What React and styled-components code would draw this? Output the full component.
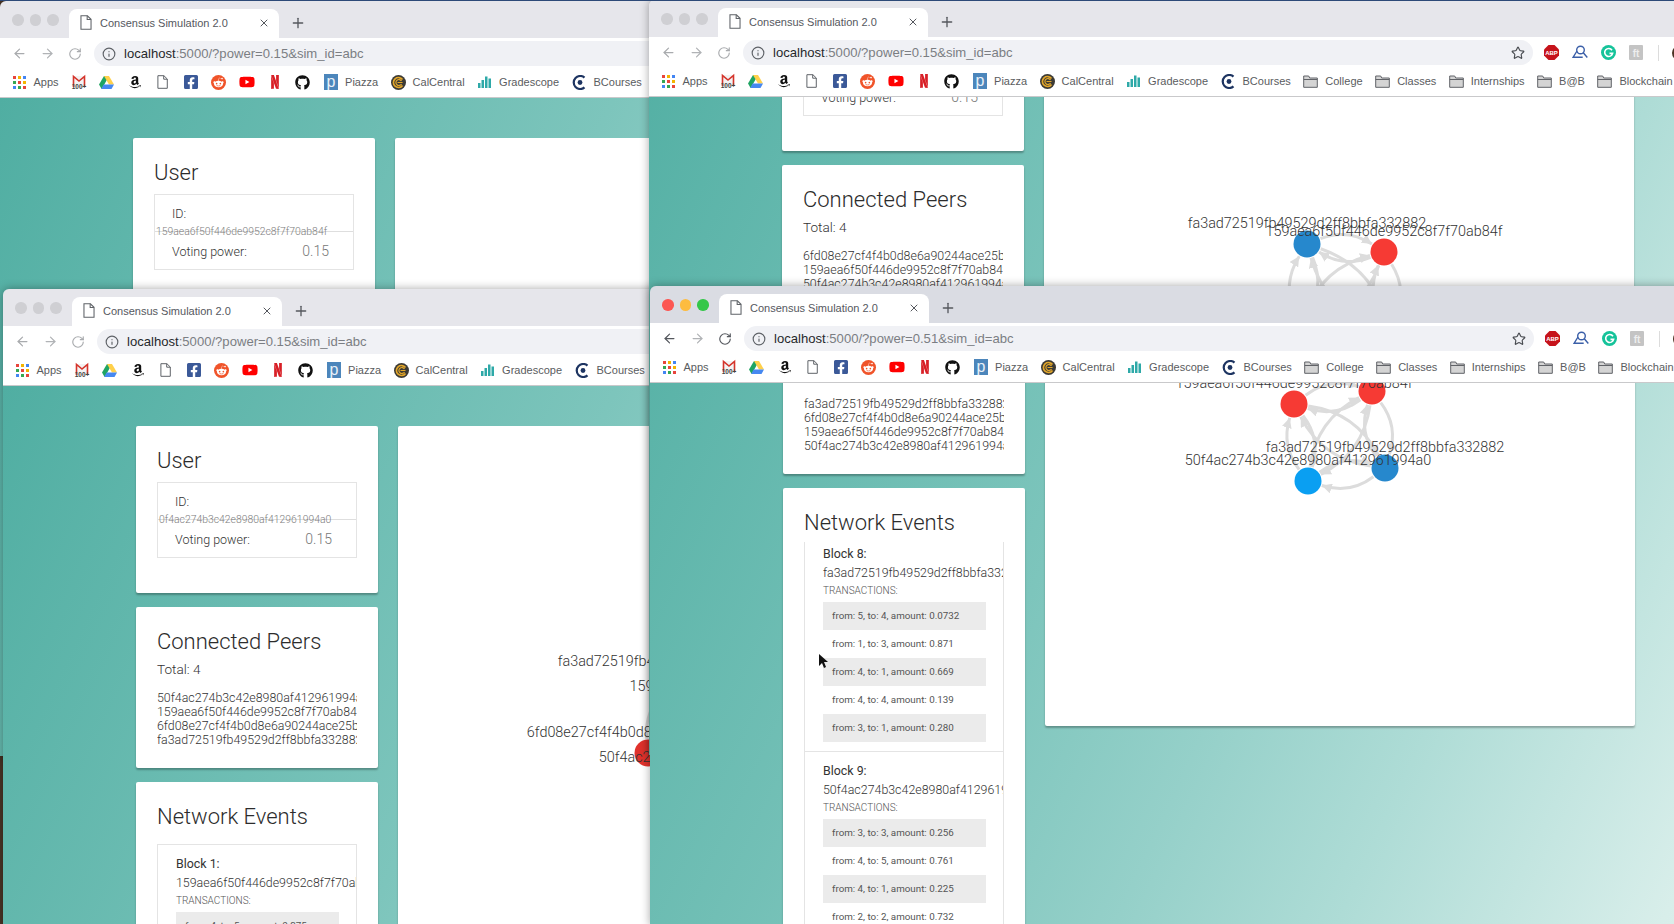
import React from 'react'
import styled, { createGlobalStyle } from 'styled-components'
import { ArrowLeft, ArrowRight, RotateCw, Info, Star, Plus, X } from 'lucide-react'
import { FaAmazon, FaFacebookSquare, FaRedditAlien, FaYoutube, FaGithub } from 'react-icons/fa'
import { SiNetflix } from 'react-icons/si'

const HASH = {
  fa3: 'fa3ad72519fb49529d2ff8bbfa332882',
  c15: '159aea6f50f446de9952c8f7f70ab84f',
  c6f: '6fd08e27cf4f4b0d8e6a90244ace25b3',
  c50: '50f4ac274b3c42e8980af412961994a0',
}

const RED = '#f63a34'
const BLUE = '#2688cd'
const SKY = '#0a9ff2'

const GRAPHS = {
  behind: [
    { x: 279, y: 256, color: BLUE, label: HASH.fa3 },
    { x: 350, y: 281, color: RED, label: HASH.c15 },
    { x: 250, y: 327, color: '#e0322c', label: HASH.c6f },
    { x: 324, y: 352, color: SKY, label: HASH.c50 },
  ],
  top: [
    { x: 263, y: 260, color: BLUE, label: HASH.fa3 },
    { x: 340, y: 268, color: RED, label: HASH.c15 },
    { x: 256, y: 343, color: SKY, label: HASH.c50 },
    { x: 346, y: 348, color: RED, label: HASH.c6f },
  ],
  front: [
    { x: 249, y: 272, color: RED, label: HASH.c15 },
    { x: 327, y: 259, color: RED, label: HASH.c6f },
    { x: 340, y: 336, color: BLUE, label: HASH.fa3 },
    { x: 263, y: 349, color: SKY, label: HASH.c50 },
  ],
}

const BLOCKS = {
  first: [
    { n: 1, hash: HASH.c15, txs: ['from: 4, to: 5, amount: 0.275'] },
  ],
  later: [
    {
      n: 8,
      hash: HASH.fa3,
      txs: [
        'from: 5, to: 4, amount: 0.0732',
        'from: 1, to: 3, amount: 0.871',
        'from: 4, to: 1, amount: 0.669',
        'from: 4, to: 4, amount: 0.139',
        'from: 3, to: 1, amount: 0.280',
      ],
    },
    {
      n: 9,
      hash: HASH.c50,
      txs: [
        'from: 3, to: 3, amount: 0.256',
        'from: 4, to: 5, amount: 0.761',
        'from: 4, to: 1, amount: 0.225',
        'from: 2, to: 2, amount: 0.732',
        'from: 1, to: 2, amount: 0.418',
      ],
    },
  ],
}

const GlobalStyle = createGlobalStyle`
  html, body {
    margin: 0;
    height: 100%;
    overflow: hidden;
    background: #4a3526;
  }
  * { box-sizing: border-box; }
`

const Desktop = styled.div`
  position: relative;
  width: 1674px;
  height: 924px;
  overflow: hidden;
  background: #4a3526;
  border-top: 1px solid #2d4a78;
`

const Window = styled.div`
  position: absolute;
  left: ${p => p.$left}px;
  top: ${p => p.$top}px;
  width: 1100px;
  height: ${p => p.$height}px;
  display: flex;
  flex-direction: column;
  overflow: hidden;
  border-radius: 6px 6px 0 0;
  box-shadow: 0 0 10px rgba(0, 0, 0, 0.35);
`

const TabStrip = styled.div`
  height: 37px;
  flex: none;
  display: flex;
  align-items: flex-end;
  padding-left: 12px;
  background: ${p => (p.$active ? '#dadce3' : '#e6e6eb')};
`

const Lights = styled.div`
  display: flex;
  gap: 6px;
  align-self: flex-start;
  margin-top: 13px;
  width: 57px;
`

const Light = styled.span`
  width: 11.5px;
  height: 11.5px;
  flex: none;
  border-radius: 50%;
  background: ${p => p.$color};
`

const Tab = styled.div`
  width: 210px;
  height: 29px;
  display: flex;
  align-items: center;
  padding: 0 9px 2px 11px;
  background: #fff;
  border-radius: 8px 8px 0 0;
  font: 11px 'Liberation Sans', sans-serif;
  color: #55585e;
`

const TabTitle = styled.span`
  flex: 1;
  margin-left: 8px;
  white-space: nowrap;
`

const NewTab = styled.span`
  display: flex;
  align-self: center;
  margin: 0 0 0 11px;
  padding-top: 7px;
  color: #55585e;
`

const Toolbar = styled.div`
  height: 29px;
  flex: none;
  display: flex;
  align-items: center;
  padding: 2px 0 0 12px;
  background: #fff;
  color: ${p => (p.$active ? '#55585e' : '#a9abae')};
`

const NavButton = styled.span`
  width: 28px;
  display: flex;
  color: ${p => (p.$dim ? '#b1b3b6' : 'inherit')};
`

const Omnibox = styled.div`
  width: 790px;
  height: 25px;
  margin-left: -2px;
  display: flex;
  align-items: center;
  padding: 0 8px 0 8px;
  border-radius: 13px;
  background: #f0f1f5;
  color: #5f6368;
`

const Url = styled.div`
  flex: 1;
  margin-left: 8px;
  font: 13.1px 'Liberation Sans', sans-serif;
  color: #7b7e83;
  white-space: nowrap;
  b {
    font-weight: 400;
    color: #26282b;
  }
`

const Extensions = styled.div`
  display: flex;
  align-items: center;
  gap: 13px;
  margin-left: 11px;
`

const Avatar = styled.span`
  width: 16px;
  height: 16px;
  border-radius: 50%;
  background: #4b3324;
`

const ExtDivider = styled.span`
  width: 1px;
  height: 16px;
  margin-left: 2px;
  background: #dcdcdc;
`

const BookmarkBar = styled.div`
  height: 31px;
  flex: none;
  display: flex;
  align-items: center;
  gap: 12px;
  padding-left: 11px;
  background: #fff;
  border-bottom: 1px solid #c9c9cb;
  font: 11px 'Liberation Sans', sans-serif;
  color: #5a5c60;
`

const Mark = styled.span`
  display: flex;
  align-items: center;
  gap: 6.5px;
  white-space: nowrap;
`

const IconBox = styled.span`
  width: 16px;
  height: 16px;
  flex: none;
  display: flex;
  align-items: center;
  justify-content: center;
  color: ${p => p.$color || 'inherit'};
`

const RedditDot = styled.span`
  width: 15px;
  height: 15px;
  display: flex;
  align-items: center;
  justify-content: center;
  border-radius: 50%;
  background: #f0542a;
  color: #fff;
`

const Page = styled.div`
  flex: 1;
  min-height: 0;
  overflow: hidden;
`

// the gradient belongs to the document, so it moves with the scroll
const Sheet = styled.div`
  display: flex;
  align-items: flex-start;
  gap: 20px;
  height: 1300px;
  margin-top: ${p => -p.$scroll}px;
  padding: 40px 0 0 133px;
  background: linear-gradient(115deg, #50aea2 0%, #7dc5bc 36%, #95d0c9 50%, #aedcd6 63%, #d8eeea 82%, #eef8f6 100%);
`

const Column = styled.div`
  width: 242px;
  flex: none;
  display: flex;
  flex-direction: column;
  gap: 14px;
`

const Card = styled.section`
  padding: 20px 21px ${p => p.$bottom}px;
  background: #fff;
  border-radius: 2px;
  box-shadow: 0 2px 2px rgba(0, 0, 0, 0.28);
  font-family: Roboto, 'Liberation Sans', sans-serif;
  font-weight: 300;
  color: #333;
  overflow: hidden;
`

const GraphCard = styled.section`
  width: 590px;
  height: 594px;
  flex: none;
  background: #fff;
  border-radius: 2px;
  box-shadow: 0 2px 2px rgba(0, 0, 0, 0.28);
  overflow: hidden;
`

const Title = styled.h2`
  margin: 0 0 4px;
  font-size: 22px;
  line-height: 30px;
  font-weight: 300;
  color: #2c2c2c;
`

const UserBox = styled.div`
  width: 200px;
  height: 76px;
  margin-top: 6px;
  border: 1px solid #e4e4e4;
  font-size: 12.5px;
  overflow: hidden;
`

const IdRow = styled.div`
  position: relative;
  height: 37px;
  padding: 11px 0 0 17px;
  line-height: 15px;
  border-bottom: 1px solid #dedede;
`

const IdHash = styled.span`
  position: absolute;
  left: 1px;
  bottom: -7px;
  font-size: 10.4px;
  line-height: 13px;
  color: #7d7d7d;
  white-space: nowrap;
`

const PowerRow = styled.div`
  display: flex;
  justify-content: space-between;
  padding: 12px 24px 0 17px;
  line-height: 15px;
`

const PowerValue = styled.span`
  font-size: 14px;
  color: #777;
`

const TotalLine = styled.div`
  font-size: 13.6px;
  line-height: 17px;
  margin-bottom: 13px;
`

const PeerList = styled.div`
  width: 200px;
  overflow: hidden;
  font-size: 12.4px;
  line-height: 14px;
  white-space: nowrap;
`

const EventsScroller = styled.div`
  width: 200px;
  height: ${p => p.$height}px;
  overflow: hidden;
`

const EventsBox = styled.div`
  margin-top: ${p => 8 - p.$scroll}px;
  border: 1px solid #e4e4e4;
  overflow: hidden;
`

const BlockItem = styled.div`
  padding: 11px 0 9.5px 18px;
  & + & {
    border-top: 1px solid #e4e4e4;
  }
`

const BlockName = styled.div`
  font-size: 12.4px;
  font-weight: 400;
  line-height: 16px;
`

const BlockHash = styled.div`
  margin-top: 3px;
  font-size: 12.4px;
  line-height: 16px;
  white-space: nowrap;
`

const TxHeading = styled.div`
  margin: 3px 0 3.5px;
  font-size: 10px;
  line-height: 14px;
  color: #555;
`

const TxRow = styled.div`
  width: 163px;
  height: 28px;
  padding-left: 9px;
  font-size: 9.8px;
  font-weight: 400;
  line-height: 28px;
  color: #555;
  white-space: nowrap;
  background: ${p => (p.$shaded ? '#ebebeb' : 'transparent')};
`

const NodeLabel = styled.text`
  font-family: Roboto, 'Liberation Sans', sans-serif;
  font-weight: 300;
  font-size: 14.4px;
  fill: #333;
  text-anchor: middle;
`

const Cursor = styled.svg`
  position: absolute;
  left: 818px;
  top: 653px;
`

// a little apps grid, nine coloured dots
const AppsIcon = () => {
  const colors = ['#e8453c', '#f4b400', '#4285f4', '#34a853', '#e8453c', '#f4b400', '#4285f4', '#34a853', '#e8453c']
  return (
    <svg width="13" height="13" viewBox="0 0 13 13">
      {colors.map((c, i) => (
        <rect key={i} x={(i % 3) * 5} y={Math.floor(i / 3) * 5} width="3" height="3" fill={c} />
      ))}
    </svg>
  )
}

const GmailIcon = () => (
  <svg width="16" height="16" viewBox="0 0 16 16">
    <path d="M2 2h12v11H2z" fill="#f3f3f3" />
    <path d="M2.5 13V2.5L8 7l5.5-4.5V13" fill="none" stroke="#d5342b" strokeWidth="1.6" />
    <text x="8" y="15" fontSize="6.5" fontWeight="700" textAnchor="middle" fill="#444" fontFamily="Liberation Sans">100+</text>
  </svg>
)

const DriveIcon = () => (
  <svg width="15" height="14" viewBox="0 0 15 14">
    <path d="M5 1h5L5 10 2.6 14 0 9.5z" fill="#1fa463" />
    <path d="M5 1h5l5 8.5h-5z" fill="#ffd04b" />
    <path d="M4.6 9.5H15L12.5 14H2.2z" fill="#4688f1" />
  </svg>
)

const PageIcon = ({ size = 14 }) => (
  <svg width={size * 0.8} height={size} viewBox="0 0 11 14" fill="#fff" stroke="#5f6368" strokeWidth="1">
    <path d="M.8.7h6L10.2 4v9.3H.8z" />
    <path d="M6.6.7v3.5h3.6" fill="none" />
  </svg>
)

const FolderIcon = () => (
  <svg width="15" height="13" viewBox="0 0 15 13">
    <path d="M.7 2V1h5l1 2h7.6v9.3H.7z" fill="#d4d4d4" stroke="#616368" strokeWidth="1" />
    <path d="M.7 4.5h13.6" stroke="#616368" strokeWidth="1" />
  </svg>
)

const PiazzaIcon = () => (
  <svg width="14" height="16" viewBox="0 0 14 16">
    <rect width="14" height="16" fill="#4c86bb" />
    <text x="7" y="12.5" fontSize="16" textAnchor="middle" fill="#e9f1f8" fontFamily="Liberation Sans">p</text>
  </svg>
)

const CalCentralIcon = () => (
  <svg width="15" height="15" viewBox="0 0 15 15" fill="none">
    <circle cx="7.5" cy="7.5" r="7.5" fill="#3c3a34" />
    <path d="M11.5 4.6a5 5 0 1 0 0 5.8" stroke="#e2a62a" strokeWidth="1.7" />
    <path d="M10.5 6a3 3 0 1 0 0 3M6.5 7.5h5" stroke="#e2a62a" strokeWidth="1.2" />
  </svg>
)

const GradescopeIcon = () => (
  <svg width="14" height="14" viewBox="0 0 14 14" fill="#2ea9a8">
    <rect x="0" y="8" width="2.5" height="5" />
    <rect x="3.5" y="5" width="2.5" height="8" />
    <rect x="7" y="1.5" width="2.5" height="11.5" />
    <rect x="10.5" y="3.5" width="2.5" height="9.5" />
  </svg>
)

const BCoursesIcon = () => (
  <svg width="15" height="15" viewBox="0 0 15 15" fill="none">
    <path d="M12.5 2.6a6.5 6.5 0 1 0 0 9.8" stroke="#1d3461" strokeWidth="2.2" />
    <circle cx="8" cy="7.5" r="2.4" fill="#1d3461" />
  </svg>
)

const AbpIcon = () => (
  <svg width="15" height="15" viewBox="0 0 15 15">
    <path d="M4.5 0h6L15 4.5v6L10.5 15h-6L0 10.5v-6z" fill="#c6131b" />
    <text x="7.5" y="9.8" fontSize="6" fontWeight="700" textAnchor="middle" fill="#fff" fontFamily="Liberation Sans">ABP</text>
  </svg>
)

const LensIcon = () => (
  <svg width="16" height="15" viewBox="0 0 16 15" fill="none" stroke="#3b5fa8" strokeWidth="1.4">
    <circle cx="8.5" cy="5" r="3.8" />
    <path d="M11.3 7.8l4 4.7M5 6L1.2 12.2h9.5" />
  </svg>
)

const GrammarlyIcon = () => (
  <svg width="15" height="15" viewBox="0 0 15 15" fill="none">
    <circle cx="7.5" cy="7.5" r="7.5" fill="#15c39a" />
    <path d="M11 5.2a4 4 0 1 0 .6 3.2H8.5" stroke="#fff" strokeWidth="1.6" />
  </svg>
)

const GreyExtIcon = () => (
  <svg width="14" height="15" viewBox="0 0 14 15">
    <rect width="14" height="15" rx="1" fill="#c4c4c4" />
    <text x="7" y="11.5" fontSize="10" fontWeight="700" textAnchor="middle" fill="#eee" fontFamily="Liberation Sans">ft</text>
  </svg>
)

const NetworkGraph = ({ nodes }) => {
  const r = 13.5
  const edges = []
  nodes.forEach((a, i) => {
    nodes.forEach((b, j) => {
      if (i === j) return
      const dx = b.x - a.x
      const dy = b.y - a.y
      const dist = Math.hypot(dx, dy)
      const cx = (a.x + b.x) / 2 + dy * 0.26
      const cy = (a.y + b.y) / 2 - dx * 0.26
      const trim = (from) => {
        const d = Math.hypot(cx - from.x, cy - from.y) || dist
        return { x: from.x + ((cx - from.x) / d) * (r + 1), y: from.y + ((cy - from.y) / d) * (r + 1) }
      }
      const s = trim(a)
      const e = trim(b)
      edges.push(`M${s.x} ${s.y}Q${cx} ${cy} ${e.x} ${e.y}`)
    })
  })
  return (
    <svg width="590" height="594" viewBox="0 0 590 594">
      <defs>
        <marker id="arrow" markerUnits="userSpaceOnUse" markerWidth="11" markerHeight="10" refX="10" refY="5" orient="auto">
          <path d="M0 0L10 5L0 10z" fill="#dcdcdc" />
        </marker>
      </defs>
      {edges.map((d, i) => (
        <path key={i} d={d} fill="none" stroke="#dcdcdc" strokeWidth="3" markerEnd="url(#arrow)" />
      ))}
      {nodes.map(n => (
        <circle key={n.label} cx={n.x} cy={n.y} r={r} fill={n.color} />
      ))}
      {nodes.map(n => (
        <NodeLabel key={n.label} x={n.x} y={n.y - 16}>{n.label}</NodeLabel>
      ))}
    </svg>
  )
}

const Bookmarks = ({ folders }) => (
  <BookmarkBar>
    <Mark>
      <IconBox><AppsIcon /></IconBox>
      <span>Apps</span>
    </Mark>
    <IconBox><GmailIcon /></IconBox>
    <IconBox><DriveIcon /></IconBox>
    <IconBox $color="#111"><FaAmazon size={14} /></IconBox>
    <IconBox><PageIcon /></IconBox>
    <IconBox $color="#3b5998"><FaFacebookSquare size={16} /></IconBox>
    <IconBox><RedditDot><FaRedditAlien size={11} /></RedditDot></IconBox>
    <IconBox $color="#f00"><FaYoutube size={16} /></IconBox>
    <IconBox $color="#d81f26"><SiNetflix size={14} /></IconBox>
    <IconBox $color="#111"><FaGithub size={15} /></IconBox>
    <Mark><IconBox><PiazzaIcon /></IconBox><span>Piazza</span></Mark>
    <Mark><IconBox><CalCentralIcon /></IconBox><span>CalCentral</span></Mark>
    <Mark><IconBox><GradescopeIcon /></IconBox><span>Gradescope</span></Mark>
    <Mark><IconBox><BCoursesIcon /></IconBox><span>BCourses</span></Mark>
    {folders.map(f => (
      <Mark key={f}><IconBox><FolderIcon /></IconBox><span>{f}</span></Mark>
    ))}
  </BookmarkBar>
)

const Chrome = ({ active, power }) => (
  <>
    <TabStrip $active={active}>
      <Lights>
        <Light $color={active ? '#fc5753' : '#cfcfd3'} />
        <Light $color={active ? '#fdbc40' : '#cfcfd3'} />
        <Light $color={active ? '#34c749' : '#cfcfd3'} />
      </Lights>
      <Tab>
        <PageIcon size={15} />
        <TabTitle>Consensus Simulation 2.0</TabTitle>
        <X size={12} strokeWidth={2} />
      </Tab>
      <NewTab><Plus size={16} strokeWidth={2} /></NewTab>
    </TabStrip>
    <Toolbar $active={active}>
      <NavButton><ArrowLeft size={15} /></NavButton>
      <NavButton $dim><ArrowRight size={15} /></NavButton>
      <NavButton><RotateCw size={14} /></NavButton>
      <Omnibox>
        <Info size={14} />
        <Url><b>localhost</b>:5000/?power={power}&amp;sim_id=abc</Url>
        <Star size={14} color="#4a4d52" />
      </Omnibox>
      <Extensions>
        <AbpIcon />
        <LensIcon />
        <GrammarlyIcon />
        <GreyExtIcon />
        <ExtDivider />
        <Avatar />
      </Extensions>
    </Toolbar>
    <Bookmarks folders={['College', 'Classes', 'Internships', 'B@B', 'Blockchain']} />
  </>
)

const UserCard = ({ id }) => (
  <Card $bottom={35}>
    <Title>User</Title>
    <UserBox>
      <IdRow>
        ID:
        <IdHash>{id}</IdHash>
      </IdRow>
      <PowerRow>
        Voting power:
        <PowerValue>0.15</PowerValue>
      </PowerRow>
    </UserBox>
  </Card>
)

const PeersCard = ({ peers }) => (
  <Card $bottom={21}>
    <Title>Connected Peers</Title>
    <TotalLine>Total: {peers.length}</TotalLine>
    <PeerList>
      {peers.map(p => <div key={p}>{p}</div>)}
    </PeerList>
  </Card>
)

const EventsCard = ({ blocks, scroll = 0, height = 200 }) => (
  <Card $bottom={0}>
    <Title>Network Events</Title>
    <EventsScroller $height={height}>
      <EventsBox $scroll={scroll}>
        {blocks.map(b => (
          <BlockItem key={b.n}>
            <BlockName>Block {b.n}:</BlockName>
            <BlockHash>{b.hash}</BlockHash>
            <TxHeading>TRANSACTIONS:</TxHeading>
            {b.txs.map((t, i) => <TxRow key={t} $shaded={i % 2 === 0}>{t}</TxRow>)}
          </BlockItem>
        ))}
      </EventsBox>
    </EventsScroller>
  </Card>
)

const Browser = ({ left, top, height, active, power, scroll = 0, user, graph, peers, blocks, eventScroll, eventHeight }) => (
  <Window $left={left} $top={top} $height={height}>
    <Chrome active={active} power={power} />
    <Page>
      <Sheet $scroll={scroll}>
        <Column>
          <UserCard id={user} />
          <PeersCard peers={peers} />
          <EventsCard blocks={blocks} scroll={eventScroll} height={eventHeight} />
        </Column>
        <GraphCard>
          {graph && <NetworkGraph nodes={graph} />}
        </GraphCard>
      </Sheet>
    </Page>
  </Window>
)

export default function App() {
  return (
    <Desktop>
      <GlobalStyle />
      <Browser
        left={0}
        top={0}
        height={755}
        power="0.15"
        user={HASH.c15}
        peers={[HASH.c50, HASH.c6f, HASH.fa3, HASH.c15]}
        blocks={BLOCKS.first}
      />
      <Browser
        left={3}
        top={288}
        height={640}
        power="0.15"
        user="0f4ac274b3c42e8980af412961994a0"
        graph={GRAPHS.behind}
        peers={[HASH.c50, HASH.c15, HASH.c6f, HASH.fa3]}
        blocks={BLOCKS.first}
      />
      <Browser
        left={649}
        top={-1}
        height={755}
        power="0.15"
        scroll={153}
        user={HASH.fa3}
        graph={GRAPHS.top}
        peers={[HASH.c6f, HASH.c15, HASH.c50, HASH.fa3]}
        blocks={BLOCKS.later}
        eventScroll={16}
      />
      <Browser
        left={650}
        top={285}
        height={640}
        active
        power="0.51"
        scroll={291}
        user={HASH.c6f}
        graph={GRAPHS.front}
        peers={[HASH.fa3, HASH.c6f, HASH.c15, HASH.c50]}
        blocks={BLOCKS.later}
        eventScroll={16}
        eventHeight={420}
      />
      <Cursor width="10" height="15" viewBox="0 0 10 15">
        <path d="M1 0v12l3-3 2 5 2-1-2-5h4z" fill="#111" />
      </Cursor>
    </Desktop>
  )
}
